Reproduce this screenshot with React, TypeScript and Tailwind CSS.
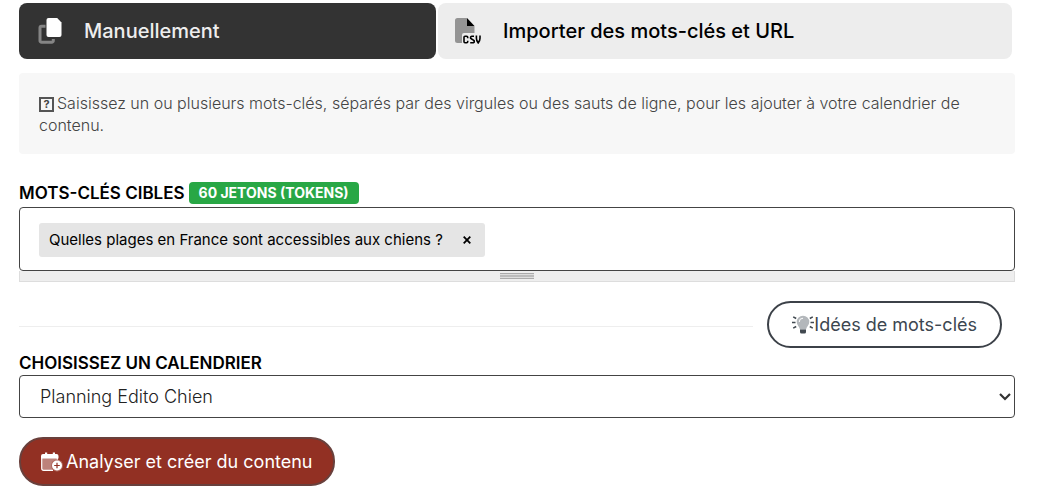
import { useState } from 'react'

function CopyIcon() {
  return (
    <svg viewBox="0 0 24 26" className="h-[26px] w-6 shrink-0" fill="none" aria-hidden="true">
      <path d="M7.500 8.200H3.500a1.500 1.500 0 0 0-1.500 1.500v13a1.500 1.500 0 0 0 1.500 1.500h10.300a1.500 1.500 0 0 0 1.500-1.500V21" stroke="#858585" strokeWidth="3" />
      <path d="M10.500 0h8.700L23.500 4.500V17a2 2 0 0 1-2 2h-11a2 2 0 0 1-2-2V2a2 2 0 0 1 2-2z" fill="#fff" />
    </svg>
  )
}

function CsvIcon() {
  return (
    <svg viewBox="0 0 26 26" className="size-[26px] shrink-0" aria-hidden="true">
      <path d="M2.500 0H12v8h7.500v7H9a2 2 0 0 0-2 2v8H2.500A2.500 2.500 0 0 1 0 22.500v-20A2.500 2.500 0 0 1 2.500 0z" fill="#949494" />
      <path d="M12 0l7.500 8H12z" fill="#000" />
      <g fill="none" stroke="#000" strokeWidth="1.600">
        <path d="M12.700 20.300v-1a1 1 0 0 0-1-1H10a1 1 0 0 0-1 1v4.400a1 1 0 0 0 1 1h1.700a1 1 0 0 0 1-1v-1" />
        <path d="M19 18.300h-2.200a1.300 1.300 0 0 0-.5 2.500l2 1.300a1.300 1.300 0 0 1-.6 2.600h-2.500" />
        <path d="M21.400 17.600v2.600c0 2 .8 3.600 1.800 4.700 1-1.100 1.800-2.700 1.800-4.700v-2.600" />
      </g>
    </svg>
  )
}

function BulbIcon() {
  return (
    <svg viewBox="0 0 22 20" className="h-5 w-[22px] shrink-0" fill="none" aria-hidden="true">
      <path
        d="M1.200 1.800l3 1.700M0 7.500h3.500M1.200 13.200l3-1.700M20.800 1.800l-3 1.700M22 7.500h-3.500M20.800 13.200l-3-1.700"
        stroke="#414950"
        strokeWidth="1.500"
      />
      <path d="M11 .7a6.300 6.300 0 0 1 6.300 6.300c0 3-2.700 4.500-3.300 7.500H8C7.400 11.500 4.700 10 4.700 7A6.300 6.300 0 0 1 11 .7z" fill="#b3b7bb" />
      <path d="M7.200 7A3.800 3.800 0 0 1 11 3.200" stroke="#fff" />
      <path d="M8 14.500h6V17a1.500 1.500 0 0 1-1.500 1.500h-3A1.500 1.500 0 0 1 8 17z" fill="#414950" />
    </svg>
  )
}

function CalendarPlusIcon() {
  return (
    <svg viewBox="0 0 22 20" className="h-5 w-[22px] shrink-0" aria-hidden="true">
      <path d="M1 6h15v12H3a2 2 0 0 1-2-2z" fill="#fff" fillOpacity=".4" />
      <path d="M2 2h2V.5h2.200V2h5.600V.5H14V2h1.500a2 2 0 0 1 2 2v2.500H0V4a2 2 0 0 1 2-2z" fill="#fff" />
      <path d="M.7 6v10.300a2 2 0 0 0 2 2H12M16.300 6v4" fill="none" stroke="#fff" strokeWidth="1.200" />
      <circle cx="16" cy="13.500" r="6" fill="#b26a61" />
      <circle cx="16" cy="13.500" r="5" fill="#fff" />
      <path d="M16 10.700v5.600M13.200 13.500h5.600" stroke="#923023" strokeWidth="1.200" />
    </svg>
  )
}

export default function App() {
  const [tab, setTab] = useState('manual')
  const [keywords, setKeywords] = useState(['Quelles plages en France sont accessibles aux chiens ?'])
  const [draft, setDraft] = useState('')

  const addKeyword = (e: React.KeyboardEvent<HTMLInputElement>) => {
    if (e.key !== 'Enter' && e.key !== ',') return
    e.preventDefault()
    if (draft.trim()) setKeywords([...keywords, draft.trim()])
    setDraft('')
  }

  return (
    <main className="bg-white pt-[3px] pr-[22px] pl-[19px] font-['Inter',sans-serif] text-black">
      <div role="tablist" className="mr-[3px] flex gap-0.5">
        <button
          type="button"
          role="tab"
          aria-selected={tab === 'manual'}
          onClick={() => setTab('manual')}
          className="flex h-14 basis-[42%] items-center gap-[22px] rounded-lg bg-[#333] pl-[19px] text-xl font-medium text-[#eee]"
        >
          <CopyIcon />
          Manuellement
        </button>
        <button
          type="button"
          role="tab"
          aria-selected={tab === 'import'}
          onClick={() => setTab('import')}
          className="flex h-14 flex-1 items-center gap-[22px] rounded-lg bg-[#ededed] pl-[17px] text-xl font-medium"
        >
          <CsvIcon />
          Importer des mots-clés et URL
        </button>
      </div>

      <p className="mt-3.5 rounded bg-[#f7f7f7] px-5 pt-[19px] pb-[18px] text-base leading-[22px] font-light text-[#444]">
        <span className="mr-[3px] inline-flex size-[15px] items-center justify-center border-2 border-[#555] align-middle text-[11px] leading-none font-bold">
          ?
        </span>
        Saisissez un ou plusieurs mots-clés, séparés par des virgules ou des sauts de ligne, pour les ajouter à votre
        calendrier de contenu.
      </p>

      <div className="mt-7 flex items-center gap-1">
        <label htmlFor="keywords" className="text-[17px] leading-[22px] font-semibold">
          MOTS-CLÉS CIBLES
        </label>
        <span className="rounded bg-[#28a745] px-2.5 text-sm leading-[22px] font-bold text-white">60 JETONS (TOKENS)</span>
      </div>

      <div className="mt-[3px]">
        <div className="flex min-h-16 flex-wrap items-center gap-2 rounded border border-[#444] px-[19px] pt-3.5 pb-3">
          {keywords.map((keyword) => (
            <span key={keyword} className="flex h-[34px] items-center gap-4 rounded-[3px] bg-[#e5e5e5] px-2.5 text-[15px]">
              {keyword}
              <button
                type="button"
                aria-label={`Supprimer ${keyword}`}
                onClick={() => setKeywords(keywords.filter((k) => k !== keyword))}
                className="flex size-4 items-center justify-center"
              >
                <svg viewBox="0 0 8 8" className="size-2" stroke="#000" strokeWidth="1.800" aria-hidden="true">
                  <path d="M.7.700l6.600 6.600M7.300.700L.7 7.300" />
                </svg>
              </button>
            </span>
          ))}
          <input
            id="keywords"
            type="text"
            value={draft}
            onChange={(e) => setDraft(e.target.value)}
            onKeyDown={addKeyword}
            className="min-w-0 flex-1 bg-transparent text-[15px] outline-none"
          />
        </div>
        <div className="flex h-[11px] items-start justify-center border border-t-0 border-[#ddd] bg-[#eee] pt-0.5">
          <div className="flex h-1.5 w-[34px] flex-col justify-center border-y border-[#aaa] bg-[#ddd]">
            <div className="h-0.5 bg-[#bbb]" />
          </div>
        </div>
      </div>

      <div className="mt-[19px] mr-[13px] flex items-center gap-3.5">
        <hr className="mt-1 flex-1 border-[#eee]" />
        <button
          type="button"
          className="flex h-[47px] items-center rounded-3xl border-2 border-[#3c4148] px-[23px] text-lg text-[#3c4650]"
        >
          <BulbIcon />
          Idées de mots-clés
        </button>
      </div>

      <label htmlFor="calendar" className="mt-1 block text-[17px] leading-[22px] font-semibold">
        CHOISISSEZ UN CALENDRIER
      </label>
      <div className="relative mt-px">
        <select
          id="calendar"
          defaultValue="chien"
          className="block h-[43px] w-full appearance-none rounded border border-[#444] bg-white px-5 text-lg font-light text-[#222]"
        >
          <option value="chien">Planning Edito Chien</option>
        </select>
        <svg
          viewBox="0 0 12 8"
          className="pointer-events-none absolute top-[18px] right-1 h-2 w-3"
          fill="none"
          stroke="#333"
          strokeWidth="2.200"
          aria-hidden="true"
        >
          <path d="M1 1l5 5 5-5" />
        </svg>
      </div>

      <button
        type="button"
        className="mt-[19px] flex h-[49px] items-center gap-[3px] rounded-3xl border-2 border-[#69403c] bg-[#923023] px-5 text-lg text-white"
      >
        <CalendarPlusIcon />
        Analyser et créer du contenu
      </button>
    </main>
  )
}
